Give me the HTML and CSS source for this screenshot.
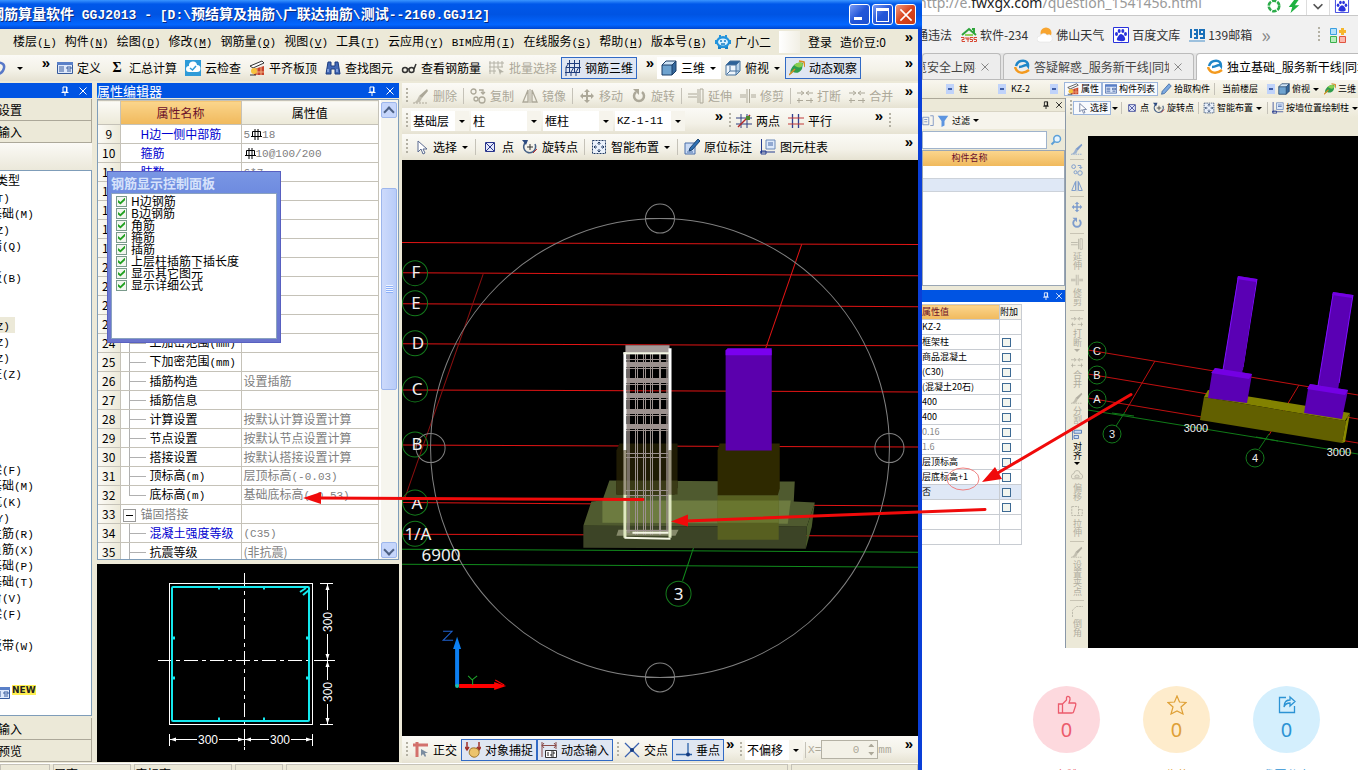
FILE: index.html
```html
<!DOCTYPE html>
<html lang="zh-CN">
<head>
  <meta charset="UTF-8">
  <meta name="viewport" content="width=device-width, initial-scale=1.0">
  <title>GGJ2013</title>
  <link rel="stylesheet" href="styles.css">
</head>
<body>
  <!-- 图标 -->
  <svg class="sprite" aria-hidden="true">
    <symbol id="undo" viewBox="0 0 16 16"><path d="M3 5c4-4 10-2 9 3s-4 5-5 6" fill="none" stroke="#5878c8" stroke-width="2.5"/><path d="M1 2v7h6z" fill="#5878c8"/></symbol>
    <symbol id="define" viewBox="0 0 16 16"><path d="M.5 2.500h15v11H.5z" fill="#dfe9fb" stroke="#365a9c"/><path d="M0 2h16v3H0z" fill="#5a80c8"/><path d="M2 7h5M2 9h5M2 11h5M10 7h4v2h-4zM10 11h4" stroke="#365a9c" fill="none"/></symbol>
    <symbol id="cloud" viewBox="0 0 16 16"><path d="M0 0h16v16H0z" fill="#2f9bd8"/><path d="M4 12a3 3 0 0 1 0-6 4 4 0 0 1 8-1 3.500 3.500 0 0 1 0 7z" fill="#fff"/><path d="M5 8l2.500 2L11 6" stroke="#2f9bd8" stroke-width="1.500" fill="none"/></symbol>
    <symbol id="slab" viewBox="0 0 16 16"><path d="M1 6l12-5 2 2L4 8z" fill="#fff" stroke="#333"/><path d="M5 9l10-3v9H5z" fill="#c8442c"/><path d="M5 12h10M8 8v7M12 7v8" stroke="#f0b080"/><circle cx="5" cy="11" r="3" fill="#f6c23c"/><path d="M1 15h6" stroke="#333"/></symbol>
    <symbol id="find" viewBox="0 0 16 16"><path d="M3 2h3v4h4V2h3l2 12h-5V9H6v5H1z" fill="#4268b4" stroke="#1c3c80"/><path d="M3 9v3M12 9v3" stroke="#b8d0ff"/></symbol>
    <symbol id="glasses" viewBox="0 0 16 16"><g fill="none" stroke="#333" stroke-width="1.500"><circle cx="4" cy="10" r="2.500"/><circle cx="10.500" cy="10" r="2.500"/><path d="M6.500 9h1.500M13 9l2-5"/></g></symbol>
    <symbol id="batch" viewBox="0 0 16 16"><path d="M1 1v13M5 1v13M9 1v8M13 1v6M0 3h15M0 7h14M0 11h7" stroke="#b4b2a6" fill="none"/><path d="M9 8l6 4-3 .500L11 15z" fill="#b4b2a6"/></symbol>
    <symbol id="rebar3d" viewBox="0 0 16 16"><path d="M4.500 0v13M9.500 0v13M14.500 0v13M2 3.500h13M1 7.500h15M0 12.500h14M4 3L1 7v9M9 7L6 12v4M14 7l-3 5v4" stroke="#1f3d7c" fill="none"/></symbol>
    <symbol id="cube" viewBox="0 0 16 16"><path d="M1 5h10v10H1z" fill="#6fa3cf"/><path d="M1 5l4-4h10l-4 4z" fill="#cfe4f6"/><path d="M11 5l4-4v10l-4 4z" fill="#34689c"/><path d="M1 5h10v10H1zM1 5l4-4h10l-4 4M15 1v10l-4 4" fill="none" stroke="#1c3f68"/></symbol>
    <symbol id="cubetop" viewBox="0 0 16 16"><path d="M1 5h10v10H1z" fill="#eef5fc"/><path d="M1 5l4-4h10l-4 4z" fill="#2c6299"/><path d="M11 5l4-4v10l-4 4z" fill="#b9d3ea"/><path d="M1 5h10v10H1zM1 5l4-4h10l-4 4M15 1v10l-4 4M5 6v5h9M5 11l-3 3" fill="none" stroke="#46719c"/></symbol>
    <symbol id="orbit" viewBox="0 0 16 16"><path d="M2 14C-1 9 8 0 14 3l-1 6c-3 5-7 4-9 3z" fill="#2f9d4c"/><path d="M5 5c4-3 7-3 9-1-1 5-6 4-9 1z" fill="#8bd04e"/><path d="M0 15l6-6M10 1l5 1 1 5" stroke="#d88b20" stroke-width="1.500" fill="none"/></symbol>
    <symbol id="brush" viewBox="0 0 16 16"><path d="M14 1l1 2-6 7-3-2z" fill="currentColor"/><path d="M6 8l3 2-2 4-6 1 3-3z" fill="currentColor" opacity=".7"/><path d="M0 15h15" stroke="currentColor" stroke-dasharray="2 1"/></symbol>
    <symbol id="copy" viewBox="0 0 16 16"><g fill="none" stroke="currentColor" stroke-width="1.300"><circle cx="3.500" cy="3.500" r="2.500"/><circle cx="12" cy="12" r="3"/><circle cx="6" cy="11" r="2"/><path d="M9 2h4v4M11 4l2 2 2-2"/></g></symbol>
    <symbol id="mirror" viewBox="0 0 16 16"><path d="M6 2v12H1zM10 2v12h5z" fill="none" stroke="currentColor" stroke-width="1.300"/><path d="M8 1v14" stroke="currentColor"/></symbol>
    <symbol id="move" viewBox="0 0 16 16"><path d="M8 1l3 3H9v3h3V5l3 3-3 3V9H9v3h2l-3 3-3-3h2V9H4v2L1 8l3-3v2h3V4H5z" fill="currentColor"/></symbol>
    <symbol id="rotate" viewBox="0 0 16 16"><path d="M5 4a5 5 0 1 0 6 0" fill="none" stroke="currentColor" stroke-width="2.500"/><path d="M2 1h6v6z" fill="currentColor"/></symbol>
    <symbol id="extend" viewBox="0 0 16 16"><path d="M0 6h9M0 9h9M12 1h3v14h-3zM10 1v14" fill="none" stroke="currentColor"/></symbol>
    <symbol id="trim" viewBox="0 0 16 16"><path d="M7 1v14M9.500 1v14M0 7h6M0 9h6M11 7h5M11 9h5" fill="none" stroke="currentColor"/></symbol>
    <symbol id="break" viewBox="0 0 16 16"><path d="M0 5h6M4 3l3 2-3 2M16 5h-6M12 3L9 5l3 2M0 12.500h6M2 10v5M9 12.500h7M14 10v5" fill="none" stroke="currentColor"/></symbol>
    <symbol id="twopt" viewBox="0 0 16 16"><path d="M5 1v14M11 1v14M0 5h16M0 11h16" stroke="#2f3f80" fill="none"/><path d="M2 14L14 2" stroke="#b02828" stroke-width="1.500"/><path d="M10 3h4v4h-4z" fill="#4e8a2c"/></symbol>
    <symbol id="parallel" viewBox="0 0 16 16"><path d="M4.500 1v14M10.500 1v14" stroke="#2f3f90" stroke-width="1.300"/><path d="M0 5h16M0 11h16" stroke="#c03838"/></symbol>
    <symbol id="cursor" viewBox="0 0 16 16"><path d="M5 2v11l3-3 2 5 2-1-2-4h4z" fill="#fff" stroke="#5a6a90"/></symbol>
    <symbol id="point" viewBox="0 0 16 16"><path d="M3.500 3.500h9v9h-9zM4 4l8 8M12 4l-8 8" fill="#e3e7fa" stroke="#29358c"/></symbol>
    <symbol id="rotpt" viewBox="0 0 16 16"><path d="M4 3a6 6 0 1 0 9 2" fill="none" stroke="#456086" stroke-width="1.600"/><path d="M0 1l6 0-2 5z" fill="#2c4a80"/><path d="M8 5v6M5 8h6" stroke="#333"/><path d="M11 14l4-4" stroke="#c03030"/></symbol>
    <symbol id="smart" viewBox="0 0 16 16"><path d="M1.500 1.500h13v13h-13z" fill="#eaf1fb" stroke="#223c64" stroke-dasharray="2 1"/><path d="M8 3v3M8 10v3M3 8h3M10 8h3M6.500 4.500L8 3l1.500 1.500M6.500 11.500L8 13l1.500-1.500M4.500 6.500L3 8l1.500 1.500M11.500 6.500L13 8l-1.500 1.500" stroke="#223c64" fill="none"/></symbol>
    <symbol id="note" viewBox="0 0 16 16"><path d="M1 4h10v11H1z" fill="#c9daf4" stroke="#4a6ea8"/><path d="M14 0l2 2-8 9-3 1 1-3z" fill="#2f71b4" stroke="#1c4470"/><path d="M3 13h6" stroke="#4a6ea8"/></symbol>
    <symbol id="coltable" viewBox="0 0 16 16"><path d="M6 1h9v9H6z" fill="#dce8fa" stroke="#6b88b8"/><path d="M8 4h5M8 6h5" stroke="#4668a8"/><path d="M1.500 0v14M0 13h15M1 12h5v3H1z" stroke="#253c90" fill="none"/></symbol>
    <symbol id="ortho" viewBox="0 0 16 16"><path d="M0 3h15M4 0v15" stroke="#d3716c" stroke-width="3"/><path d="M8 7v7l2-2 2 3 1-1-1-3h3z" fill="#7b8da0"/></symbol>
    <symbol id="snap" viewBox="0 0 16 16"><path d="M2 0v7M14 0v7M0 5l2 3 2-3M12 5l2 3 2-3" stroke="#a03028" stroke-width="1.500" fill="none"/><path d="M5 8c0-3 8-3 9 1s-3 7-6 6-5-4-3-7z" fill="#ecc46c" stroke="#9c7228"/></symbol>
    <symbol id="dynin" viewBox="0 0 16 16"><path d="M1 0v15M15 0v7M1 3.500h14M3 1L1 3.500 3 6M13 1l2 2.500L13 6" stroke="#8b4b48" fill="none"/><path d="M4.500 8.500h11v7h-11z" fill="#fff" stroke="#333"/><path d="M7 10v4M10 10h3v2h-3v2h3" stroke="#222" fill="none"/></symbol>
    <symbol id="cross" viewBox="0 0 16 16"><path d="M1 1l14 14M15 1L1 15" stroke="#3a62b0" stroke-width="1.300"/><circle cx="8" cy="8" r="2" fill="#143a80"/></symbol>
    <symbol id="perp" viewBox="0 0 16 16"><path d="M12 1v12M0 12.500h16" stroke="#2c62a8" stroke-width="1.300"/><circle cx="12" cy="12.500" r="2" fill="#143a80"/></symbol>
    <symbol id="robot" viewBox="0 0 16 16"><path d="M3 12h10v3h-3v-1H6v1H3z" fill="#187fc4"/><ellipse cx="8" cy="8" rx="7" ry="6" fill="#2394dc"/><path d="M0 6h2v4H0zM14 6h2v4h-2zM4 1h2v3H4zM10 1h2v3h-2z" fill="#2394dc"/><ellipse cx="8" cy="8" rx="5" ry="3.500" fill="#d9f1ff"/><path d="M5 7h2M9 7h2M6 10h4" stroke="#187fc4" stroke-width="1.300"/></symbol>
    <symbol id="steel" viewBox="0 0 12 12"><path d="M2.500 3.500h8v5h-8zM5 1v11M8 1v11M1 8.500h11" stroke="#000" fill="none"/></symbol>
    <symbol id="pin" viewBox="0 0 10 10"><path d="M3 1h4v5H3zM1.500 6.500h7M5 7v3" stroke="currentColor" fill="none"/><path d="M6 1h1v5H6z" fill="currentColor"/></symbol>
    <symbol id="close" viewBox="0 0 10 10"><path d="M1.500 1.500l7 7M8.500 1.500l-7 7" stroke="currentColor" fill="none"/></symbol>
    <symbol id="filter" viewBox="0 0 16 16"><path d="M1 1h14l-5 7v6l-4 2V8z" fill="#5d95e0"/></symbol>
    <symbol id="doc" viewBox="0 0 16 16"><path d="M1 3h8v10H1zM11 1h4v13h-4M3 6h4M3 9h4" fill="none" stroke="#6683bb"/></symbol>
    <symbol id="search" viewBox="0 0 16 16"><circle cx="9.500" cy="6.500" r="4.500" fill="#e5f4ff" stroke="#5b9fd8" stroke-width="2"/><path d="M6 10l-4 4" stroke="#5b9fd8" stroke-width="2.500"/></symbol>
    <symbol id="pencil" viewBox="0 0 16 16"><path d="M12 1l3 3-9 10-4 1 1-4z" fill="#7daae0" stroke="#33609c"/></symbol>
    <symbol id="house" viewBox="0 0 16 16"><path d="M1 8l7-6 7 6M11 2h2v4" fill="none" stroke="#2fa53c" stroke-width="2"/><path d="M4 8h8" stroke="#8fd35a" stroke-width="2"/><path d="M0 10.500h3v2H1v2h3M5 10v2h3M7 10v5M12 10.500H9v2h2.500v2H9M16 10.500h-3v2h2.500v2H13" fill="none" stroke="#d8452f"/></symbol>
    <symbol id="sun" viewBox="0 0 16 16"><circle cx="9" cy="6" r="5.500" fill="#f8a530"/><path d="M3 15a3 3 0 0 1 0-6 4 4 0 0 1 7-1 3.500 3.500 0 0 1 3 7z" fill="#fff" stroke="#dcdcdc" stroke-width=".5"/></symbol>
    <symbol id="paw" viewBox="0 0 16 16"><path d="M.5.500h15v15H.5z" fill="#fff" stroke="#2932dc"/><g fill="#2932dc"><ellipse cx="3.500" cy="7" rx="1.500" ry="2"/><ellipse cx="6.200" cy="4" rx="1.500" ry="2"/><ellipse cx="9.800" cy="4" rx="1.500" ry="2"/><ellipse cx="12.500" cy="7" rx="1.500" ry="2"/><path d="M8 7c2 0 5 4 4 6s-7 1-8 0 2-6 4-6z"/></g></symbol>
    <symbol id="m139" viewBox="0 0 16 16"><path d="M1 3h1v8M5 3h3v8H5M5 7h3M15 7h-4V3h4v8h-4" fill="none" stroke="#1a6fb8" stroke-width="2"/><path d="M0 14h16" stroke="#9cc0dd" stroke-width="2"/></symbol>
    <symbol id="apps" viewBox="0 0 16 16"><path d="M.5 1.500h6v6h-6z" fill="#b3e1fb" stroke="#3a9fe0"/><path d="M.5 9.500h6v6h-6z" fill="#b9edbc" stroke="#3bb04d"/><path d="M9.500 9.500h6v6h-6z" fill="#fbb8ad" stroke="#e1543f"/><path d="M11 1h3v2h2v3h-2v2h-3V6H9V3h2z" fill="#f6b62c"/></symbol>
    <symbol id="swirl" viewBox="0 0 16 16"><path d="M2 7c2-7 13-7 12 0-2-3-4 1-9 1" fill="none" stroke="#1f86c8" stroke-width="2.500"/><path d="M1 8c2 7 9 7 14 3" fill="none" stroke="#f39a1f" stroke-width="2.500"/></symbol>
    <symbol id="bolt" viewBox="0 0 16 16"><path d="M9 0L2 9h4l-2 7 10-9H9l5-7z" fill="#1fb141"/></symbol>
    <symbol id="recycle" viewBox="0 0 16 16"><circle cx="8" cy="8" r="6" fill="none" stroke="#2cab4a" stroke-width="3" stroke-dasharray="5 1.300"/></symbol>
    <symbol id="chevron" viewBox="0 0 16 16"><path d="M3 6l5 5 5-5" fill="none" stroke="#555" stroke-width="2"/></symbol>
    <symbol id="align" viewBox="0 0 16 16"><path d="M2 0v16M4 3h10v4H4zM4 10h6v4H4z" fill="#c6dbf5" stroke="#3d66a8"/></symbol>
    <symbol id="corner" viewBox="0 0 16 16"><path d="M2 16V7l5-5h9" fill="none" stroke="currentColor" stroke-dasharray="3 1"/></symbol>
    <symbol id="stretch" viewBox="0 0 16 16"><path d="M1 2h9v12H1zM10 6h5v8h-5" fill="none" stroke="currentColor" stroke-dasharray="3 1"/></symbol>
    <symbol id="offset" viewBox="0 0 16 16"><path d="M2 13a4 4 0 0 1 2-7 4 4 0 0 1 8 0 4 4 0 0 1 2 7zM5 11a2 2 0 0 1 6 0z" fill="none" stroke="currentColor"/></symbol>
    <symbol id="thumb" viewBox="0 0 20 20"><path d="M1.500 9h4v9h-4zM5.500 9l4-4V2.500c1-2 4-1 3.500 2L12 8h5.500c1.500 0 1.500 1 1 3l-2 6c0 1-1 1-2 1h-9" fill="none" stroke="currentColor" stroke-width="1.300"/></symbol>
    <symbol id="star" viewBox="0 0 20 20"><path d="M10 1l2.500 6 6.500.500-5 4.500 2 7-6-3-6 3 2-7-5-4.500L7.500 7z" fill="none" stroke="currentColor" stroke-width="1.200"/></symbol>
    <symbol id="share" viewBox="0 0 20 20"><path d="M9 2.500H2.500v15h15V11M7 12c0-6 3-7 6-7V2l5 4.500-5 4.500V8c-3 0-5 1-6 4z" fill="none" stroke="currentColor" stroke-width="1.300"/></symbol>
  </svg>

  <div class="app">
    <header class="titlebar">
      <h1>钢筋算量软件<span> GGJ2013 - [D:\</span>预结算及抽筋<span>\</span>广联达抽筋<span>\</span>测试<span>--2160.GGJ12]</span></h1>
      <div class="window-btns">
        <button class="min" aria-label="最小化"></button>
        <button class="max" aria-label="最大化"></button>
        <button class="shut" aria-label="关闭"><svg class="icon"><use href="#close"/></svg></button>
      </div>
    </header>

    <nav class="menubar">
      <a href="#">楼层<span class="lat">(<u>L</u>)</span></a>
      <a href="#">构件<span class="lat">(<u>N</u>)</span></a>
      <a href="#">绘图<span class="lat">(<u>D</u>)</span></a>
      <a href="#">修改<span class="lat">(<u>M</u>)</span></a>
      <a href="#">钢筋量<span class="lat">(<u>Q</u>)</span></a>
      <a href="#">视图<span class="lat">(<u>V</u>)</span></a>
      <a href="#">工具<span class="lat">(<u>T</u>)</span></a>
      <a href="#">云应用<span class="lat">(<u>Y</u>)</span></a>
      <a href="#"><span class="lat">BIM</span>应用<span class="lat">(<u>I</u>)</span></a>
      <a href="#">在线服务<span class="lat">(<u>S</u>)</span></a>
      <a href="#">帮助<span class="lat">(<u>H</u>)</span></a>
      <a href="#">版本号<span class="lat">(<u>B</u>)</span></a>
      <a href="#" class="helper"><svg class="icon"><use href="#robot"/></svg>广小二</a>
      <span class="gloss"></span>
      <a href="#">登录</a>
      <a href="#">造价豆:0</a>
      <span class="more">»</span>
    </nav>

    <div class="toolbar top-tools">
      <div class="group history">
        <svg class="icon"><use href="#undo"/></svg><i class="arrow"></i><span class="more">»</span>
      </div>
      <div class="group model">
        <button><svg class="icon"><use href="#define"/></svg>定义</button>
        <button><b class="icon sigma">Σ</b>汇总计算</button>
        <button><svg class="icon"><use href="#cloud"/></svg>云检查</button>
        <button><svg class="icon"><use href="#slab"/></svg>平齐板顶</button>
        <button><svg class="icon"><use href="#find"/></svg>查找图元</button>
        <button><svg class="icon"><use href="#glasses"/></svg>查看钢筋量</button>
        <button disabled><svg class="icon"><use href="#batch"/></svg>批量选择</button>
        <button class="active"><svg class="icon"><use href="#rebar3d"/></svg>钢筋三维</button>
        <span class="more">»</span>
      </div>
      <div class="group view">
        <button class="white"><svg class="icon"><use href="#cube"/></svg>三维<i class="arrow"></i></button>
        <button><svg class="icon"><use href="#cubetop"/></svg>俯视<i class="arrow"></i></button>
        <button class="active"><svg class="icon"><use href="#orbit"/></svg>动态观察</button>
        <span class="more">»</span>
      </div>
    </div>

    <div class="workspace">
      <aside class="sidebar">
        <div class="panel-head"><svg class="mini"><use href="#pin"/></svg><svg class="mini"><use href="#close"/></svg></div>
        <button class="fold">程设置</button>
        <button class="fold">图输入</button>
        <div class="side-tools"></div>
        <ul class="tree">
          <li>件类型</li>
          <li><span class="lat">(T)</span></li>
          <li>基础<span class="lat">(M)</span></li>
          <li><span class="lat">(Z)</span></li>
          <li>墙<span class="lat">(Q)</span></li>
          <li></li>
          <li>板<span class="lat">(B)</span></li>
          <li></li>
          <li></li>
          <li class="on"><span class="lat">(Z)</span></li>
          <li><span class="lat">(Z)</span></li>
          <li><span class="lat">(Z)</span></li>
          <li>柱<span class="lat">(Z)</span></li>
          <li></li>
          <li></li>
          <li></li>
          <li></li>
          <li></li>
          <li>梁<span class="lat">(F)</span></li>
          <li>基础<span class="lat">(M)</span></li>
          <li>坑<span class="lat">(K)</span></li>
          <li><span class="lat">(Y)</span></li>
          <li>主筋<span class="lat">(R)</span></li>
          <li>负筋<span class="lat">(X)</span></li>
          <li>基础<span class="lat">(P)</span></li>
          <li>基础<span class="lat">(T)</span></li>
          <li>台<span class="lat">(V)</span></li>
          <li>梁<span class="lat">(F)</span></li>
          <li></li>
          <li>板带<span class="lat">(W)</span></li>
          <li></li>
          <li></li>
          <li class="new"><svg class="icon"><use href="#define"/></svg><b>NEW</b></li>
        </ul>
        <button class="fold">件输入</button>
        <button class="fold">表预览</button>
      </aside>

      <section class="props">
        <div class="panel-head"><h2>属性编辑器</h2><svg class="mini"><use href="#pin"/></svg><svg class="mini"><use href="#close"/></svg></div>
        <div class="grid">
          <div class="grid-scroll">
            <table>
              <thead><tr><th></th><th class="sorted">属性名称</th><th>属性值</th></tr></thead>
              <tbody>
                <tr><th>9</th><td class="blue">H边一侧中部筋</td><td><span class="lat">5</span><svg class="steel"><use href="#steel"/></svg><span class="lat">18</span></td></tr>
                <tr><th>10</th><td class="blue">箍筋</td><td><svg class="steel"><use href="#steel"/></svg><span class="lat">10@100/200</span></td></tr>
                <tr><th>11</th><td class="blue">肢数</td><td><span class="lat">6*7</span></td></tr>
                <tr><th>12</th><td></td><td></td></tr>
                <tr><th>17</th><td></td><td></td></tr>
                <tr><th>18</th><td></td><td></td></tr>
                <tr><th>19</th><td></td><td></td></tr>
                <tr><th>20</th><td></td><td></td></tr>
                <tr><th>21</th><td></td><td></td></tr>
                <tr><th>22</th><td></td><td></td></tr>
                <tr><th>23</th><td></td><td></td></tr>
                <tr><th>24</th><td class="leaf">上加密范围<span class="lat">(mm)</span></td><td></td></tr>
                <tr><th>25</th><td class="leaf">下加密范围<span class="lat">(mm)</span></td><td></td></tr>
                <tr><th>26</th><td class="leaf">插筋构造</td><td>设置插筋</td></tr>
                <tr><th>27</th><td class="leaf">插筋信息</td><td></td></tr>
                <tr><th>28</th><td class="leaf">计算设置</td><td>按默认计算设置计算</td></tr>
                <tr><th>29</th><td class="leaf">节点设置</td><td>按默认节点设置计算</td></tr>
                <tr><th>30</th><td class="leaf">搭接设置</td><td>按默认搭接设置计算</td></tr>
                <tr><th>31</th><td class="leaf">顶标高<span class="lat">(m)</span></td><td>层顶标高<span class="lat">(-0.03)</span></td></tr>
                <tr><th>32</th><td class="leaf last">底标高<span class="lat">(m)</span></td><td>基础底标高<span class="lat">(-0.53)</span></td></tr>
                <tr><th>33</th><td class="parent"><button class="toggle" aria-label="折叠"></button>锚固搭接</td><td></td></tr>
                <tr><th>34</th><td class="leaf blue">混凝土强度等级</td><td><span class="lat">(C35)</span></td></tr>
                <tr><th>35</th><td class="leaf">抗震等级</td><td>(非抗震)</td></tr>
              </tbody>
            </table>
          </div>
          <div class="scrollbar"><button class="up" aria-label="向上"></button><span class="thumb"></span><button class="down" aria-label="向下"></button></div>
        </div>
        <svg class="preview" viewBox="97 564 302 198">
          <g fill="none" stroke="#fff" shape-rendering="crispEdges">
            <path d="M169.500 583.500h143v141h-143z"/>
            <path d="M244.500 573v177M158 660.500h177" stroke-dasharray="14 4 4 4"/>
            <path d="M327.500 583v27M327.500 634v46M327.500 704v20M320 583.500h13M320 724.500h13M320 660.500h15M169.500 734v12M312.500 734v12M244.500 734v12M169 739.500h28M219 739.500h50M291 739.500h21"/>
          </g>
          <path d="M170 739.500l6-2v4zM244 739.500l-6-2v4zM245 739.500l6-2v4zM312 739.500l-6-2v4zM327.500 584l-2 6h4zM327.500 660l-2-6h4zM327.500 661l-2 6h4zM327.500 724l-2-6h4z" fill="#fff"/>
          <rect x="172" y="587" width="137" height="134" rx="1" fill="none" stroke="#14e8ee" stroke-width="2"/>
          <path d="M300 592l6-4M303 595l6-5" stroke="#14e8ee" stroke-width="2"/>
          <path d="M218 588h2M263 588h2M218 719h2M263 719h2M173 638h2M173 678h2M306 638h2M306 678h2" stroke="#14e8ee" stroke-width="3"/>
          <g class="dim"><text x="208" y="744">300</text><text x="280" y="744">300</text><text transform="translate(332 622) rotate(-90)">300</text><text transform="translate(332 692) rotate(-90)">300</text></g>
        </svg>

        <div class="dialog" role="dialog" aria-label="钢筋显示控制面板">
          <h3>钢筋显示控制面板</h3>
          <div class="dialog-body">
            <label><input type="checkbox" checked>H边钢筋</label>
            <label><input type="checkbox" checked>B边钢筋</label>
            <label><input type="checkbox" checked>角筋</label>
            <label><input type="checkbox" checked>箍筋</label>
            <label><input type="checkbox" checked>插筋</label>
            <label><input type="checkbox" checked>上层柱插筋下插长度</label>
            <label><input type="checkbox" checked>显示其它图元</label>
            <label><input type="checkbox" checked>显示详细公式</label>
          </div>
        </div>
      </section>

      <main class="canvas">
        <div class="toolbar edit-tools">
          <span class="grip"></span>
          <button disabled><svg class="icon"><use href="#brush"/></svg>删除</button><i class="sep"></i>
          <button disabled><svg class="icon"><use href="#copy"/></svg>复制</button>
          <button disabled><svg class="icon"><use href="#mirror"/></svg>镜像</button><i class="sep"></i>
          <button disabled><svg class="icon"><use href="#move"/></svg>移动</button>
          <button disabled><svg class="icon"><use href="#rotate"/></svg>旋转</button><i class="sep"></i>
          <button disabled><svg class="icon"><use href="#extend"/></svg>延伸</button>
          <button disabled><svg class="icon"><use href="#trim"/></svg>修剪</button><i class="sep"></i>
          <button disabled><svg class="icon"><use href="#break"/></svg>打断</button>
          <button disabled><svg class="icon"><use href="#break"/></svg>合并</button>
          <span class="more">»</span>
        </div>
        <div class="toolbar">
          <div class="group selectors">
            <span class="grip"></span>
            <label class="combo short"><select aria-label="楼层"><option>基础层</option></select></label>
            <label class="combo"><select aria-label="构件类型"><option>柱</option></select></label>
            <label class="combo"><select aria-label="柱类型"><option>框柱</option></select></label>
            <label class="combo lat"><select aria-label="构件"><option>KZ-1-11</option></select></label>
            <span class="more">»</span>
          </div>
          <div class="group axes">
            <span class="grip"></span>
            <button><svg class="icon"><use href="#twopt"/></svg>两点</button>
            <button><svg class="icon"><use href="#parallel"/></svg>平行</button>
            <span class="more">»</span>
          </div>
          <span class="grip"></span>
        </div>
        <div class="toolbar">
          <span class="grip"></span>
          <button><svg class="icon"><use href="#cursor"/></svg>选择<i class="arrow"></i></button><i class="sep"></i>
          <button><svg class="icon"><use href="#point"/></svg>点</button>
          <button><svg class="icon"><use href="#rotpt"/></svg>旋转点</button><i class="sep"></i>
          <button><svg class="icon"><use href="#smart"/></svg>智能布置<i class="arrow"></i></button><i class="sep"></i>
          <button><svg class="icon"><use href="#note"/></svg>原位标注</button>
          <button><svg class="icon"><use href="#coltable"/></svg>图元柱表</button>
          <span class="more">»</span>
        </div>

        <svg class="scene" viewBox="402 160 515 575" preserveAspectRatio="xMidYMid slice">
          <!-- 轴网 -->
          <g stroke="#e01414" fill="none">
            <path d="M402 242.500l515 2M402 272.500l515 3M402 303.500l515 3M402 343.500l515 2M402 389.500l515 2M402 444.500l515 2M402 502l515 3.500M402 533.500l515 2M801 244l-36 104"/>
            <path d="M483 274l-78 223" stroke="#8c1010"/>
          </g>
          <path d="M402 548.500l515 3M402 563.500l515 3M693 547l-11 33" stroke="#118a1c" fill="none"/>
          <g stroke="#147a1c" fill="none"><circle cx="415" cy="273" r="12.500"/><circle cx="415" cy="303" r="12.500"/><circle cx="415" cy="343" r="12.500"/><circle cx="415" cy="389" r="12.500"/><circle cx="415" cy="444" r="12.500"/><circle cx="415" cy="502" r="12.500"/><circle cx="415" cy="533" r="12.500"/><circle cx="678" cy="593" r="12.500"/></g>

          <!-- 基础 -->
          <path d="M609 480l185 1-1 20 21 1-8 24-223-1 8-24 11-1z" fill="#4f5a2f"/>
          <path d="M602 500h188l-3 23-185-1z" fill="#6d7b40"/>
          <path d="M583 525l223 1-1 22-222-1z" fill="#3c4426"/>
          <path d="M814 502l-8 24-1 22 6-22z" fill="#4a5a2a"/>
          <path d="M616 450l3-7h58v44l-3 7h-58z" fill="#1f1b04"/>
          <path d="M616 494h61v-14h-61z" fill="#3a3a16"/>
          <path d="M717 450l2-7h60v45l-2 7h-60z" fill="#2e2900"/>
          <path d="M717 495h61v44h-61z" fill="#575f20"/>
          <path d="M717 500h61v22h-61z" fill="#69762f"/>
          <path d="M725 350h46v100h-46z" fill="#5b00ad"/><path d="M725 350l2-2h44v7h-46z" fill="#7a00ef"/>
          <path d="M618 529h60l-3 6h-59z" fill="#85896a"/>

          <!-- 钢筋笼 -->
          <path d="M625 345h44v9h-44z" fill="#a39a98"/>
          <g fill="none" stroke="#9c918e" shape-rendering="crispEdges">
            <path d="M628 352v180M667 352v180" stroke-width="3" opacity=".7"/>
            <path d="M635.500 352v182M637.500 352v182M643.500 352v182M645.500 352v182M650.500 352v182M652.500 352v182M659.500 352v182"/>
            <path d="M626 364h41M626 380h41M626 395h41M626 411h41M626 426h41" stroke-width="5"/>
            <path d="M626 359.500h41M626 368.500h41M626 384.500h41M626 399.500h41M626 415.500h41M626 430.500h41M626 452.500h41M626 456.500h41M626 489.500h41M626 494.500h41M626 529.500h41"/>
          </g>
          <path d="M624.500 352v98M669.500 348v102" stroke="#fff" stroke-width="3"/>
          <path d="M624.500 450v44M669.500 450v44" stroke="#9c9680" stroke-width="3"/>
          <path d="M624.500 494v43M669.500 494v43" stroke="#dfe8c0" stroke-width="3"/>
          <path d="M623 353h46M632 532h36M624 537l46 1" stroke="#f4f6e4" stroke-width="2"/>

          <g stroke="#808080" fill="none"><circle cx="659.500" cy="447.500" r="229"/><circle cx="659.500" cy="218.500" r="14.500"/><circle cx="659.500" cy="676.500" r="14.500"/><circle cx="430.500" cy="447.500" r="14.500"/><circle cx="888.500" cy="447.500" r="14.500"/><path d="M645 218.500h29M645 676.500h29"/></g>

          <g class="axis-label"><text x="416" y="278">F</text><text x="416" y="309">E</text><text x="418" y="349">D</text><text x="417" y="395">C</text><text x="417" y="450">B</text><text x="417" y="508">A</text><text x="418" y="539">1/A</text><text x="441" y="560">6900</text><text x="678" y="599">3</text></g>

          <!-- 坐标轴 -->
          <path d="M457 685v-38" stroke="#0c7ff2" stroke-width="4"/><path d="M457 636l-4 12h8z" fill="#0c7ff2"/>
          <path d="M459 685h36" stroke="#f00" stroke-width="4"/><path d="M506 685l-12-4v8z" fill="#f00"/>
          <path d="M443 630.500h9l-9 9h10" fill="none" stroke="#1f62d0"/><path d="M468 675l4 4 5-4M472.500 679v5" fill="none" stroke="#1eaa2c"/><path d="M495 679l9 5" stroke="#f00"/><circle cx="457" cy="685" r="2" fill="#20c0a0"/>
        </svg>

        <div class="toolbar bottom-tools">
          <span class="grip"></span>
          <button><svg class="icon"><use href="#ortho"/></svg>正交</button>
          <button class="active"><svg class="icon"><use href="#snap"/></svg>对象捕捉</button>
          <button class="active"><svg class="icon"><use href="#dynin"/></svg>动态输入</button>
          <span class="grip"></span>
          <button><svg class="icon"><use href="#cross"/></svg>交点</button>
          <button class="active"><svg class="icon"><use href="#perp"/></svg>垂点</button>
          <span class="more inline">»</span>
          <span class="grip"></span>
          <label class="combo short"><select aria-label="偏移"><option>不偏移</option></select></label><i class="sep"></i>
          <label class="offset lat">X=<input type="text" value="0" disabled><i class="spin"></i>mm</label>
          <span class="more">»</span>
        </div>
      </main>
    </div>
    <footer class="status"><span></span><span>层高:2</span><span>底标高:</span><span></span><span class="rest"></span><span class="rest"></span></footer>
  </div>

  <div class="browser">
    <div class="address">
      <p>http://e.<b>fwxgx.com</b>/question_1541456.html</p>
      <svg class="icon"><use href="#recycle"/></svg><svg class="icon"><use href="#bolt"/></svg><svg class="icon boxed"><use href="#chevron"/></svg><svg class="icon"><use href="#paw"/></svg>
    </div>
    <div class="bookmarks">
      <a href="#">通违法</a>
      <a href="#"><svg class="icon"><use href="#house"/></svg>软件-234</a>
      <a href="#"><svg class="icon"><use href="#sun"/></svg>佛山天气</a>
      <a href="#"><svg class="icon"><use href="#paw"/></svg>百度文库</a>
      <a href="#"><svg class="icon"><use href="#m139"/></svg>139邮箱</a>
      <span class="next">»</span>
      <span class="grip"></span>
      <svg class="icon"><use href="#apps"/></svg>
    </div>
    <div class="tabs">
      <div class="tab first"><span>览安全上网导</span><svg class="mini"><use href="#close"/></svg></div>
      <div class="tab"><svg class="icon"><use href="#swirl"/></svg><span>答疑解惑_服务新干线|同城</span><svg class="mini"><use href="#close"/></svg></div>
      <div class="tab current"><svg class="icon"><use href="#swirl"/></svg><span>独立基础_服务新干线|同城</span></div>
    </div>

    <div class="shot">
      <div class="shot-bar">
        <span class="pick w1"></span>
        <span class="pick w2">柱</span>
        <span class="pick w2">KZ-2</span>
        <button class="on"><svg class="icon"><use href="#slab"/></svg>属性</button>
        <button class="on"><svg class="icon"><use href="#define"/></svg>构件列表</button>
        <button><svg class="icon"><use href="#pencil"/></svg>拾取构件</button>
        <i class="sep"></i>
        <span class="pick w3">当前楼层</span>
        <button><svg class="icon"><use href="#cube"/></svg>俯视<i class="arrow"></i></button>
        <button><svg class="icon"><use href="#orbit"/></svg>三维</button>
      </div>
      <div class="shot-main">
        <div class="shot-left">
          <div class="plain-head"><svg class="mini"><use href="#pin"/></svg><svg class="mini"><use href="#close"/></svg></div>
          <div class="filter-row"><svg class="icon"><use href="#doc"/></svg><svg class="icon"><use href="#filter"/></svg>过滤<i class="arrow"></i></div>
          <div class="search-row"><input type="text" aria-label="搜索"><svg class="icon"><use href="#search"/></svg></div>
          <div class="comp-list">
            <div class="comp-head">构件名称</div>
            <div class="comp"></div>
            <div class="comp picked"></div>
          </div>
          <div class="panel-head"><svg class="mini"><use href="#pin"/></svg><svg class="mini"><use href="#close"/></svg></div>
          <div class="attr">
            <table>
              <thead><tr><th class="sorted">属性值</th><th>附加</th></tr></thead>
              <tbody>
                <tr><td>KZ-2</td><td></td></tr>
                <tr><td>框架柱</td><td><input type="checkbox" aria-label="附加"></td></tr>
                <tr><td>商品混凝土</td><td><input type="checkbox" aria-label="附加"></td></tr>
                <tr><td>(C30)</td><td><input type="checkbox" aria-label="附加"></td></tr>
                <tr><td>(混凝土20石)</td><td><input type="checkbox" aria-label="附加"></td></tr>
                <tr><td>400</td><td><input type="checkbox" aria-label="附加"></td></tr>
                <tr><td>400</td><td><input type="checkbox" aria-label="附加"></td></tr>
                <tr><td class="dimmed">0.16</td><td><input type="checkbox" aria-label="附加"></td></tr>
                <tr><td class="dimmed">1.6</td><td><input type="checkbox" aria-label="附加"></td></tr>
                <tr><td>层顶标高</td><td><input type="checkbox" aria-label="附加"></td></tr>
                <tr><td>层底标高+1</td><td><input type="checkbox" aria-label="附加"></td></tr>
                <tr class="picked"><td>否</td><td><input type="checkbox" aria-label="附加"></td></tr>
                <tr><td></td><td><input type="checkbox" aria-label="附加"></td></tr>
                <tr><td></td><td></td></tr>
                <tr><td></td><td></td></tr>
              </tbody>
            </table>
          </div>
        </div>
        <div class="shot-right">
          <div class="shot-bar second">
            <span class="grip"></span>
            <button class="on"><svg class="icon"><use href="#cursor"/></svg>选择</button><i class="arrow"></i><i class="sep"></i>
            <button><svg class="icon"><use href="#point"/></svg>点</button>
            <button><svg class="icon"><use href="#rotpt"/></svg>旋转点</button><i class="sep"></i>
            <button><svg class="icon"><use href="#smart"/></svg>智能布置<i class="arrow"></i></button><i class="sep"></i>
            <button><svg class="icon"><use href="#coltable"/></svg>按墙位置绘制柱<i class="arrow"></i></button>
          </div>
          <div class="shot-view">
            <div class="vbar">
              <button class="tint"><svg class="icon"><use href="#brush"/></svg></button><hr>
              <button class="tint"><svg class="icon"><use href="#copy"/></svg></button>
              <button class="tint"><svg class="icon"><use href="#mirror"/></svg></button><hr>
              <button class="tint"><svg class="icon"><use href="#move"/></svg></button>
              <button class="tint"><svg class="icon"><use href="#rotate"/></svg></button><hr>
              <button><svg class="icon"><use href="#extend"/></svg><span>延伸</span></button>
              <button><svg class="icon"><use href="#trim"/></svg><span>修剪</span></button><hr>
              <button><svg class="icon"><use href="#break"/></svg><span>打断</span><i class="arrow"></i></button>
              <button><svg class="icon"><use href="#break"/></svg><span>合并</span></button>
              <button><svg class="icon"><use href="#brush"/></svg><span>分割</span></button>
              <button class="dark"><svg class="icon"><use href="#align"/></svg><span>对齐</span><i class="arrow"></i></button>
              <button><svg class="icon"><use href="#offset"/></svg><span>偏移</span></button>
              <button><svg class="icon"><use href="#stretch"/></svg><span>拉伸</span></button><hr>
              <button><svg class="icon"><use href="#brush"/></svg><span>设置夹点</span></button><hr>
              <button><svg class="icon"><use href="#corner"/></svg><span>倒角</span></button>
            </div>
            <svg class="scene" viewBox="1088 136 270 512" preserveAspectRatio="xMinYMin slice">
              <path d="M1088 350l270 45M1088 374l270 45M1088 398l270 45M1155 361l-30 51M1299 385l-30 50" stroke="#c01010" fill="none"/>
              <path d="M1088 410l270 44M1125 412l-9 14M1269 434l-10 15M1112 413l22 3M1256 437l22 4" stroke="#107a18" fill="none"/>
              <g stroke="#147a1c" fill="none"><circle cx="1097" cy="351" r="9"/><circle cx="1097" cy="375" r="9"/><circle cx="1097" cy="399" r="9"/><circle cx="1112" cy="434" r="9"/><circle cx="1255" cy="458" r="9"/></g>
              <path d="M1204 397l4-7 142 23-5 8z" fill="#828200"/><path d="M1204 397l142 24-4 22-142-23z" fill="#626000"/><path d="M1350 413l-5 29-3 1 4-22z" fill="#8a8a00"/>
              <g fill="#5a00b4"><path d="M1215 368l37 6-5 29-39-5 4-25z"/><path d="M1310 384l38 6-6 29-38-6 4-24z"/><path d="M1238 276l19 3-15 95-19-3z"/><path d="M1333 292l20 3-15 95-20-3z"/></g>
              <path d="M1215 368l37 6-3 5-38-6zM1310 384l38 6-3 5-38-6zM1238 276l19 3-1 3-19-3zM1333 292l20 3-1 3-20-3z" fill="#7400e4"/>
              <path d="M1238 279l-15 91M1333 295l-15 91M1257 279l-14 88M1353 295l-14 88" stroke="#7f10ff" fill="none"/>
              <path d="M1238 282l-12 88h17l13-88zM1333 298l-12 88h17l13-88z" fill="#5a00b4"/>
              <g class="axis-small"><text x="1097" y="355">C</text><text x="1097" y="379">B</text><text x="1097" y="403">A</text><text x="1112" y="438">3</text><text x="1255" y="462">4</text><text x="1196" y="432">3000</text><text x="1339" y="456">3000</text></g>
            </svg>
          </div>
        </div>
      </div>
    </div>

    <div class="votes">
      <div class="vote like"><button><svg><use href="#thumb"/></svg>0</button><span>点赞</span></div>
      <div class="vote fav"><button><svg><use href="#star"/></svg>0</button><span>收藏</span></div>
      <div class="vote send"><button><svg><use href="#share"/></svg>0</button><span>我要分享</span></div>
    </div>
  </div>

  <!-- 红色批注箭头 -->
  <svg class="marks" viewBox="0 0 1358 770">
    <g stroke="#f00a0a" stroke-width="3" stroke-linecap="round"><path d="M643 499.500L318 498M985 509.500L686 521M1131 394.500L996 474"/></g>
    <path d="M303 498l18-6v12zM671 521.500l17-7v12zM982 482l13-15 7 12z" fill="#f00a0a"/>
    <ellipse cx="963" cy="479" rx="16" ry="11" fill="none" stroke="#f08080"/>
  </svg>
</body>
</html>
```

FILE: styles.css
```css
:root {
  --face: #ece9d8;
  --blue: #0054e3;
  --line: #c5c2b8;
  --orange: linear-gradient(#fbd58c, #f0b95c);
}

* {
  box-sizing: border-box;
}

body {
  position: relative;
  display: flex;
  height: 100vh;
  margin: 0;
  overflow: hidden;
  background: #fff;
  color: #000;
  font: 12px/16px "Noto Sans CJK SC", sans-serif;
}

button, input, select {
  margin: 0;
  padding: 0;
  border: 0;
  background: none;
  color: inherit;
  font: inherit;
}

a {
  color: inherit;
  text-decoration: none;
}

h1, h2, h3, p, ul {
  margin: 0;
  padding: 0;
  list-style: none;
}

table {
  border-collapse: collapse;
  table-layout: fixed;
}

.sprite {
  display: none;
}

.icon {
  flex: none;
  width: 16px;
  height: 16px;
}

.mini {
  flex: none;
  width: 10px;
  height: 10px;
}

.lat {
  font-family: "Liberation Mono", "Noto Sans CJK SC", monospace;
  font-size: 11px;
}

/* window */
.app {
  display: flex;
  flex: 1;
  flex-direction: column;
  min-width: 0;
  border-right: 4px solid #0a3fd8;
  background: var(--face);
}

.titlebar {
  display: flex;
  flex: none;
  justify-content: space-between;
  align-items: center;
  height: 29px;
  margin-right: -4px;
  padding-right: 6px;
  overflow: hidden;
  background: linear-gradient(#3a95ff, #0058ea 14%, #0054e3 50%, #0366ff 85%, #0046cf);
}

.titlebar h1 {
  color: #fff;
  font-size: 14px;
  line-height: 20px;
  text-indent: -10px;
  text-shadow: 1px 1px #0a2a80;
  white-space: pre;
}

.titlebar h1 span {
  font-family: "Liberation Mono", monospace;
  font-size: 13px;
}

.window-btns {
  display: flex;
  gap: 2px;
}

.window-btns button {
  display: flex;
  justify-content: center;
  align-items: center;
  width: 21px;
  height: 21px;
  border: 1px solid #fff;
  border-radius: 3px;
  background: linear-gradient(135deg, #7a9cf5, #2356d8 50%, #1d50d0);
  color: #fff;
}

.window-btns .min::before {
  width: 8px;
  height: 3px;
  margin: 8px 4px 0 0;
  background: #fff;
  content: "";
}

.window-btns .max::before {
  width: 11px;
  height: 10px;
  border: 1px solid #fff;
  border-top-width: 3px;
  content: "";
}

.window-btns .shut {
  background: linear-gradient(135deg, #f09a80, #d9431c 50%, #c83a14);
}

.menubar {
  display: flex;
  flex: none;
  gap: 8px;
  align-items: center;
  height: 26px;
  padding: 0 3px 0 13px;
  white-space: nowrap;
}

.menubar .helper {
  display: flex;
  gap: 4px;
}

.gloss {
  width: 21px;
  height: 22px;
  background: linear-gradient(90deg, #fff, #f1efe4);
}

.more {
  align-self: flex-start;
  width: 12px;
  margin-left: auto;
  font: bold 15px/16px "Liberation Sans", sans-serif;
  text-align: center;
}

.more.inline {
  margin: 0;
}

.toolbar {
  display: flex;
  flex: none;
  align-items: center;
  height: 26px;
  padding-right: 3px;
  background: linear-gradient(#fbfaf6, #f3f1e7 60%, #e6e2d2);
  white-space: nowrap;
}

.top-tools {
  height: 28px;
  border-bottom: 2px solid var(--face);
}

.edit-tools {
  height: 25px;
}

.toolbar .group {
  display: flex;
  flex: none;
  align-items: center;
  height: 100%;
}

.toolbar .history {
  width: 53px;
  padding-right: 1px;
}

.history .icon {
  margin-left: -8px;
}

.history .arrow {
  margin-left: 9px;
}

.toolbar .model {
  width: 603px;
}

.toolbar .view {
  flex: 1;
  padding-left: 1px;
}

.toolbar button {
  display: flex;
  flex: none;
  gap: 4px;
  align-items: center;
  height: 22px;
  padding: 0 4px;
}

.toolbar button:disabled {
  color: #aca899;
}

.toolbar .active {
  padding: 0 3px;
  border: 1px solid #316ac5;
  background: #dfe6f2;
}

.toolbar .white {
  background: #fff;
}

.sigma {
  font: bold 14px/16px "Liberation Serif", serif;
  text-align: center;
}

.arrow {
  flex: none;
  width: 0;
  margin: 0 1px;
  border: 3px solid transparent;
  border-top-color: currentColor;
  border-bottom: 0;
}

.sep {
  flex: none;
  width: 1px;
  height: 16px;
  margin: 0 2px;
  background: var(--line);
}

.grip {
  flex: none;
  width: 2px;
  height: 16px;
  margin: 0 1px 0 4px;
  background: repeating-linear-gradient(#b4b1a4 0 2px, transparent 2px 4px);
}

.combo {
  position: relative;
  width: 70px;
  height: 20px;
  margin-left: 2px;
  background: linear-gradient(90deg, #fff 56px, #f6f4ec 56px);
}

.combo.short {
  width: 58px;
  background: linear-gradient(90deg, #fff 44px, #f6f4ec 44px);
}

.combo select {
  width: 100%;
  height: 100%;
  padding-left: 2px;
  appearance: none;
}

.combo::after {
  position: absolute;
  top: 9px;
  right: 4px;
  border: 3px solid transparent;
  border-top-color: #000;
  border-bottom: 0;
  content: "";
}

.selectors {
  width: 323px;
}

.axes {
  width: 160px;
}

.offset {
  display: flex;
  align-items: center;
  color: #aca899;
}

.offset input {
  width: 57px;
  height: 19px;
  padding-right: 18px;
  border: 1px solid #b4b1a4;
  background: #f3f1e7;
  text-align: right;
}

.spin {
  width: 6px;
  height: 12px;
  margin-right: 4px;
  margin-left: -10px;
  background: #aca899;
  clip-path: polygon(50% 0, 100% 30%, 0 30%, 50% 0, 0 70%, 100% 70%, 50% 100%, 0 70%);
}

.workspace {
  display: flex;
  flex: 1;
  min-height: 0;
}

.panel-head {
  display: flex;
  flex: none;
  gap: 8px;
  justify-content: flex-end;
  align-items: center;
  height: 15px;
  padding-right: 4px;
  background: var(--blue);
  color: #fff;
}

.panel-head h2 {
  flex: 1;
  font-size: 13px;
  font-weight: 400;
  line-height: 15px;
}

/* left navigation */
.sidebar {
  display: flex;
  flex: none;
  flex-direction: column;
  width: 92px;
  margin-right: 5px;
  padding-bottom: 1px;
  overflow: hidden;
}

.sidebar .panel-head {
  margin-bottom: 1px;
}

.fold {
  flex: none;
  height: 22px;
  border: 1px solid #aca899;
  border-width: 0 1px 1px 0;
  background: var(--face);
  text-align: left;
  text-indent: -14px;
}

.side-tools {
  flex: none;
  height: 27px;
  background: linear-gradient(#fbfaf6, #ebe8da);
}

.tree {
  flex: 1;
  margin-bottom: 2px;
  overflow: hidden;
  border: 1px solid #7f9db9;
  border-width: 1px 1px 1px 0;
  background: #fff;
  text-indent: -10px;
}

.tree li {
  height: 16px;
}

.tree li:first-child {
  height: 18px;
  line-height: 18px;
  text-indent: -16px;
}

.tree .on {
  width: 15px;
  background: var(--face);
}

.tree .new {
  display: flex;
  gap: 2px;
  margin-left: -6px;
  text-indent: 0;
}

.tree .new b {
  align-self: flex-start;
  background: #ffef50;
  color: #222;
  font: bold 9px/10px "DejaVu Sans", sans-serif;
}

/* property editor */
.props {
  position: relative;
  display: flex;
  flex: none;
  flex-direction: column;
  width: 302px;
  margin-right: 3px;
  padding-bottom: 1px;
}

.grid {
  display: flex;
  flex: 1;
  justify-content: space-between;
  margin-top: 1px;
  min-height: 0;
  border: 1px solid #7f9db9;
  background: #fff;
}

.grid-scroll {
  overflow: hidden;
}

.grid table {
  width: 281px;
}

.grid th {
  height: 19px;
  padding: 0;
  border: 1px solid var(--line);
  border-left: 0;
  background: linear-gradient(90deg, #fbfaf6, #ece9d8);
  font-weight: 400;
  line-height: 16px;
}

.grid thead th {
  height: 24px;
  background: linear-gradient(#fbfaf6, #ece9d8);
}

.grid thead th:first-child {
  width: 22px;
}

.grid thead .sorted {
  width: 121px;
}

.sorted.sorted.sorted {
  background: var(--orange);
  color: #6a0f2a;
}

.grid td {
  height: 19px;
  padding: 0 0 0 2px;
  border: 1px solid var(--line);
  color: #808080;
  line-height: 16px;
  white-space: nowrap;
}

.grid td:nth-child(2) {
  padding-left: 20px;
  color: #000;
}

.grid td.blue:nth-child(2) {
  color: #0000d0;
}

.grid td.leaf:nth-child(2) {
  padding-left: 29px;
  background: linear-gradient(#b0b0b0, #b0b0b0) 8px 9px / 17px 1px no-repeat, linear-gradient(#b0b0b0, #b0b0b0) 8px 0 / 1px 100% no-repeat;
}

.grid td.last:nth-child(2) {
  background-size: 17px 1px, 1px 50%;
}

.grid td.parent:nth-child(2) {
  padding-left: 2px;
  color: #808080;
}

.toggle {
  width: 13px;
  height: 13px;
  margin-right: 5px;
  border: 1px solid #999;
  background: linear-gradient(#000, #000) center / 7px 1px no-repeat;
  vertical-align: -2px;
}

.steel {
  width: 12px;
  height: 12px;
  vertical-align: -2px;
}

.scrollbar {
  display: flex;
  flex-direction: column;
  width: 17px;
  padding: 2px 1px 1px 0;
  background: #f6f5ee;
}

.scrollbar button {
  flex: none;
  height: 16px;
  border: 1px solid #9db6ec;
  border-radius: 2px;
  background: #c6d6fb;
}

.scrollbar button::before {
  display: block;
  width: 6px;
  height: 6px;
  margin: 4px auto 0;
  border: 2px solid #4d6185;
  border-width: 2px 0 0 2px;
  transform: rotate(45deg);
  content: "";
}

.scrollbar .down::before {
  margin-top: 0;
  transform: rotate(225deg);
}

.thumb {
  flex: 200;
  margin: 70px 0 152px;
  border: 1px solid #9db6ec;
  border-radius: 2px;
  background: repeating-linear-gradient(#eef3ff 0 1px, #8cb0f8 1px 2px) center / 7px 8px no-repeat, linear-gradient(90deg, #cddafb, #b8ccf8);
}

.preview {
  flex: none;
  height: 198px;
  margin-top: 4px;
  background: #000;
}

.dim text {
  fill: #fff;
  font-family: "Liberation Sans", sans-serif;
  font-size: 12px;
  text-anchor: middle;
}

.dialog {
  position: absolute;
  top: 88px;
  left: 10px;
  width: 174px;
  height: 172px;
  padding: 0 4px 4px;
  background: linear-gradient(#7a97e4, #6f8ce0 20px, #6a73cc);
  box-shadow: inset 0 0 0 1px #5860c0;
}

.dialog h3 {
  height: 22px;
  color: #d6e2fb;
  font-size: 13px;
  line-height: 23px;
}

.dialog-body {
  height: 146px;
  padding: 1px 4px;
  border: 1px solid #8aa2c0;
  background: #fff;
}

.dialog label {
  display: flex;
  gap: 4px;
  align-items: center;
  height: 12px;
  line-height: 12px;
}

input[type="checkbox"] {
  display: block;
  width: 11px;
  height: 11px;
  border: 1px solid #7a9a8c;
  background: #f2f5ef;
  appearance: none;
}

input[type="checkbox"]:checked::after {
  display: block;
  width: 7px;
  height: 7px;
  margin: 1px;
  background: #21a121;
  clip-path: polygon(0 35%, 35% 65%, 100% 0, 100% 40%, 35% 100%, 0 70%);
  content: "";
}

/* drawing area */
.canvas {
  display: flex;
  flex: 1;
  flex-direction: column;
  min-width: 0;
}

.scene {
  display: block;
  flex: 1;
  width: 100%;
  min-width: 0;
  min-height: 0;
  background: #000;
}

.axis-label text {
  fill: #f0f0f0;
  font-family: "Noto Sans", sans-serif;
  font-size: 17px;
  text-anchor: middle;
}

.axis-small text {
  fill: #eee;
  font-family: "Liberation Sans", sans-serif;
  font-size: 11px;
  text-anchor: middle;
}

.bottom-tools {
  height: 27px;
}

.status {
  display: flex;
  flex: none;
  gap: 3px;
  height: 7px;
  overflow: hidden;
  border-top: 1px solid #fff;
}

.status span {
  width: 78px;
  height: 20px;
  border: 1px solid var(--line);
  line-height: 18px;
}

.status span:first-child {
  width: 50px;
}

.status span:nth-child(3) {
  width: 98px;
}

.status span:nth-child(4) {
  width: 48px;
}

.status .rest {
  flex: 4;
}

.status .rest:last-child {
  flex: 1;
}

/* browser */
.browser {
  display: flex;
  flex: none;
  flex-direction: column;
  width: 436px;
  overflow: hidden;
}

.address {
  display: flex;
  flex: none;
  gap: 4px;
  align-items: flex-end;
  height: 16px;
  padding-right: 8px;
  border-bottom: 1px solid #c8c8c8;
}

.address p {
  flex: 1;
  padding-bottom: 2px;
  color: #999;
  font: 14px/20px "Noto Sans", sans-serif;
  text-indent: -4px;
  white-space: nowrap;
}

.address b {
  color: #222;
  font-weight: 400;
}

.address .icon {
  padding-bottom: 2px;
}

.address .boxed {
  width: 24px;
  border: 1px solid #ddd;
  border-width: 0 1px;
}

.bookmarks {
  display: flex;
  flex: none;
  gap: 9px;
  align-items: center;
  height: 37px;
  padding-right: 12px;
  background: #f1f1f1;
  color: #333;
  white-space: nowrap;
}

.bookmarks a {
  display: flex;
  gap: 3px;
  align-items: center;
}

.bookmarks a:first-child {
  margin-left: -6px;
}

.next {
  flex: 1;
  color: #888;
  font-size: 20px;
}

.tabs {
  display: flex;
  flex: none;
  gap: 2px;
  height: 27px;
  border-bottom: 1px solid #bbb;
  background: #e4e4e4;
  color: #444;
  white-space: nowrap;
}

.tab {
  display: flex;
  flex: none;
  gap: 4px;
  align-items: center;
  width: 191px;
  padding: 0 10px;
  border: 1px solid #bbb;
  border-bottom: 0;
  border-radius: 4px 4px 0 0;
  background: #ededed;
}

.tab span {
  flex: 1;
  overflow: hidden;
}

.tab .mini {
  color: #888;
}

.tab.first {
  width: 79px;
  padding-left: 0;
  text-indent: -8px;
}

.tab.current {
  height: 27px;
  background: #fff;
  color: #000;
}

/* smaller program view inside the page */
.shot {
  display: flex;
  flex: none;
  flex-direction: column;
  height: 568px;
  font-size: 9px;
  line-height: 12px;
}

.shot .icon {
  width: 12px;
  height: 12px;
}

.shot .mini {
  width: 8px;
  height: 8px;
}

.shot-bar {
  display: flex;
  flex: none;
  align-items: center;
  height: 18px;
  background: linear-gradient(#f8f6ee, var(--face));
  white-space: nowrap;
}

.shot-bar.second {
  height: 20px;
}

.shot-bar button {
  display: flex;
  flex: none;
  gap: 2px;
  align-items: center;
  height: 14px;
  padding: 0 2px;
}

.shot-bar .on {
  border: 1px solid #9db6dc;
  background: #f8fafd;
}

.shot-bar .sep {
  height: 12px;
}

.pick {
  display: flex;
  flex: none;
  align-items: center;
  width: 52px;
  padding-left: 5px;
}

.pick::after {
  width: 8px;
  height: 10px;
  margin-left: auto;
  background: linear-gradient(#4060a8, #4060a8) center / 4px 2px no-repeat, #c0d3fa;
  content: "";
}

.pick.w1 {
  width: 32px;
}

.pick.w2 + .pick.w2 {
  margin-right: 6px;
}

.pick.w3 {
  width: 58px;
  margin-right: 1px;
}

.shot-main {
  display: flex;
  flex: 1;
  min-height: 0;
}

.shot-left {
  display: flex;
  flex: none;
  flex-direction: column;
  width: 144px;
  border-right: 1px solid #8a98a8;
  background: var(--face);
}

.plain-head {
  display: flex;
  gap: 5px;
  justify-content: flex-end;
  align-items: center;
  height: 14px;
  padding-right: 2px;
  border-top: 1px solid #aca899;
  border-bottom: 1px solid #d8d4c4;
}

.filter-row {
  display: flex;
  gap: 3px;
  align-items: center;
  height: 17px;
  background: #f6f4ec;
}

.filter-row .arrow {
  margin: 0;
}

.search-row {
  display: flex;
  gap: 3px;
  align-items: center;
  height: 21px;
  padding-right: 3px;
}

.search-row input {
  flex: 1;
  min-width: 0;
  height: 18px;
  border: 1px solid #9fb3cc;
  background: #fff;
}

.comp-list {
  height: 136px;
  margin-bottom: 4px;
  border: 1px solid #9aa6b4;
  background: #fff;
}

.comp-head {
  height: 15px;
  padding-right: 48px;
  background: var(--orange);
  color: #6a0f2a;
  line-height: 14px;
  text-align: center;
}

.comp {
  height: 13px;
  border-bottom: 1px solid #ccd2da;
}

.picked {
  background: #dfe8f6;
}

.shot-left .panel-head {
  gap: 5px;
  height: 12px;
  padding-right: 2px;
}

.attr {
  flex: 1;
  overflow: hidden;
  background: #fff;
}

.attr table {
  width: 100px;
  margin-top: 2px;
}

.attr th, .attr td {
  height: 15px;
  padding: 0;
  border: 1px solid #c8ccd2;
  border-left: 0;
  font-weight: 400;
  line-height: 12px;
  text-align: left;
  white-space: nowrap;
}

.attr th:last-child {
  width: 22px;
  background: #f6f4ec;
}

.attr .dimmed {
  color: #888;
}

.attr input[type="checkbox"] {
  width: 9px;
  height: 9px;
  margin-left: 2px;
  border-color: #3d6a94;
}

.shot-right {
  display: flex;
  flex: 1;
  flex-direction: column;
  min-width: 0;
  background: var(--face);
}

.shot-view {
  display: flex;
  flex: 1;
  min-height: 0;
  padding-top: 18px;
}

.vbar {
  display: flex;
  flex: none;
  flex-direction: column;
  align-items: center;
  width: 22px;
  padding-top: 5px;
  overflow: hidden;
  color: #b0ada0;
  line-height: 10px;
}

.vbar hr {
  width: 14px;
  margin: 2px 0;
  border: 0;
  border-top: 1px solid #c8c4b4;
}

.vbar button {
  display: flex;
  flex: none;
  flex-direction: column;
  gap: 2px;
  align-items: center;
  min-height: 16px;
  padding: 2px 0;
}

.vbar span {
  writing-mode: vertical-rl;
}

.vbar .tint {
  color: #7d9ccc;
}

.vbar .dark {
  color: #000;
}

.votes {
  display: flex;
  gap: 43px;
  padding: 38px 0 0 111px;
}

.vote {
  width: 67px;
}

.vote button {
  display: flex;
  flex-direction: column;
  gap: 3px;
  align-items: center;
  width: 67px;
  height: 67px;
  padding-top: 9px;
  border-radius: 50%;
  font: 20px/24px "Noto Sans", sans-serif;
}

.vote svg {
  width: 20px;
  height: 20px;
}

.vote span {
  display: block;
  margin-top: 14px;
  text-align: center;
}

.like {
  color: #ec5b6c;
}

.like button {
  background: #fdd9de;
}

.fav {
  color: #dfa036;
}

.fav button {
  background: #feeccc;
}

.send {
  color: #2c93d4;
}

.send button {
  background: #d4effd;
}

.marks {
  position: absolute;
  inset: 0;
  width: 100%;
  height: 100%;
  pointer-events: none;
}
```
